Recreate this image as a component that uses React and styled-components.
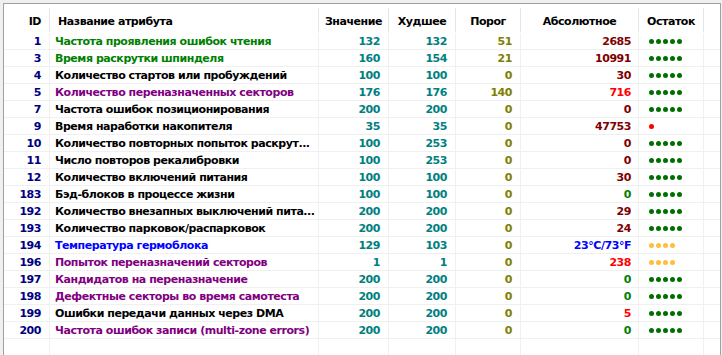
import React from "react";
import styled, { createGlobalStyle } from "styled-components";

const Global = createGlobalStyle`
  html, body { margin: 0; padding: 0; background: #f0f0f0; }
  body { width: 722px; height: 355px; overflow: hidden; }
  #root { height: 355px; }
`;

const C = {
  green: "#008000",
  black: "#000000",
  purple: "#800080",
  blue: "#0000ff",
  teal: "#008080",
  olive: "#808000",
  darkred: "#800000",
  red: "#ff0000",
  navy: "#000080",
};

const COLS = "46px 269px 70px 67px 65px 118px 65px 1fr";
const GRID = "#f0f0f0";
const SEP = "#e5e5e5";

const Frame = styled.div`
  height: 355px;
  box-sizing: border-box;
  padding: 3px 1px 0 3px;
  background: #f0f0f0;
  display: flex;
`;

const ListBox = styled.div`
  flex: 1;
  display: flex;
  flex-direction: column;
  background: #ffffff;
  border: 1px solid #a0a0a0;
  border-bottom: none;
  font-family: "DejaVu Sans", Tahoma, sans-serif;
  font-weight: bold;
  font-size: 11px;
  letter-spacing: -0.45px;
  overflow: hidden;
`;

const HeaderRow = styled.div`
  display: grid;
  grid-template-columns: ${COLS};
  padding-top: 4px;
  height: 24px;
`;

const HeadCell = styled.div`
  display: flex;
  align-items: center;
  justify-content: ${(p) => p.$align || "center"};
  padding: 3px ${(p) => (p.$align === "flex-end" ? "8px" : "0")} 0 ${(p) => (p.$align === "flex-start" ? "8px" : "0")};
  border-right: ${(p) => (p.$last ? "none" : `1px solid ${SEP}`)};
  color: #000;
  white-space: nowrap;
`;

const Body = styled.div`
  display: flex;
  flex-direction: column;
  padding-top: 1px;
`;

const Row = styled.div`
  display: grid;
  grid-template-columns: ${COLS};
  height: 16px;
  border-bottom: 1px solid ${GRID};
`;

const Cell = styled.div`
  display: flex;
  align-items: center;
  justify-content: ${(p) => p.$align || "flex-end"};
  padding: 1px ${(p) => p.$pr ?? 8}px 0 ${(p) => p.$pl ?? 0}px;
  border-right: ${(p) => (p.$last ? "none" : `1px solid ${GRID}`)};
  color: ${(p) => p.$color || "#000"};
  white-space: nowrap;
  overflow: hidden;
  line-height: 15px;
`;

const Filler = styled.div`
  flex: 1;
  display: grid;
  grid-template-columns: ${COLS};
`;

const FillCell = styled.div`
  border-right: ${(p) => (p.$last ? "none" : `1px solid ${GRID}`)};
`;

const Dots = styled.div`
  display: flex;
  gap: 2px;
`;

const Dot = styled.span`
  width: 5px;
  height: 5px;
  border-radius: 50%;
  background: ${(p) => p.$color};
`;

const DG = "#006f00";
const OR = "#ffbf3a";
const RD = "#ff0000";

const rows = [
  [1, "Частота проявления ошибок чтения", C.green, 132, 132, 51, "2685", C.darkred, 5, DG],
  [3, "Время раскрутки шпинделя", C.green, 160, 154, 21, "10991", C.darkred, 5, DG],
  [4, "Количество стартов или пробуждений", C.black, 100, 100, 0, "30", C.darkred, 5, DG],
  [5, "Количество переназначенных секторов", C.purple, 176, 176, 140, "716", C.red, 5, DG],
  [7, "Частота ошибок позиционирования", C.black, 200, 200, 0, "0", C.darkred, 5, DG],
  [9, "Время наработки накопителя", C.black, 35, 35, 0, "47753", C.darkred, 1, RD],
  [10, "Количество повторных попыток раскрут...", C.black, 100, 253, 0, "0", C.darkred, 5, DG],
  [11, "Число повторов рекалибровки", C.black, 100, 253, 0, "0", C.darkred, 5, DG],
  [12, "Количество включений питания", C.black, 100, 100, 0, "30", C.darkred, 5, DG],
  [183, "Бэд-блоков в процессе жизни", C.black, 100, 100, 0, "0", C.green, 5, DG],
  [192, "Количество внезапных выключений пита...", C.black, 200, 200, 0, "29", C.darkred, 5, DG],
  [193, "Количество парковок/распарковок", C.black, 200, 200, 0, "24", C.darkred, 5, DG],
  [194, "Температура гермоблока", C.blue, 129, 103, 0, "23°C/73°F", C.blue, 4, OR],
  [196, "Попыток переназначений секторов", C.purple, 1, 1, 0, "238", C.red, 4, OR],
  [197, "Кандидатов на переназначение", C.purple, 200, 200, 0, "0", C.green, 5, DG],
  [198, "Дефектные секторы во время самотеста", C.purple, 200, 200, 0, "0", C.green, 5, DG],
  [199, "Ошибки передачи данных через DMA", C.black, 200, 200, 0, "5", C.red, 5, DG],
  [200, "Частота ошибок записи (multi-zone errors)", C.purple, 200, 200, 0, "0", C.green, 5, DG],
];

export default function App() {
  return (
    <>
      <Global />
      <Frame>
        <ListBox>
          <HeaderRow>
            <HeadCell $align="flex-end">ID</HeadCell>
            <HeadCell $align="flex-start">Название атрибута</HeadCell>
            <HeadCell>Значение</HeadCell>
            <HeadCell>Худшее</HeadCell>
            <HeadCell>Порог</HeadCell>
            <HeadCell>Абсолютное</HeadCell>
            <HeadCell>Остаток</HeadCell>
            <HeadCell $last />
          </HeaderRow>
          <Body>
            {rows.map(([id, name, nc, val, worst, thr, abs, ac, n, dc]) => (
              <Row key={id}>
                <Cell $color={C.navy}>{id}</Cell>
                <Cell $align="flex-start" $pl={5} $pr={2} $color={nc}>{name}</Cell>
                <Cell $color={C.teal}>{val}</Cell>
                <Cell $color={C.teal}>{worst}</Cell>
                <Cell $color={C.olive}>{thr}</Cell>
                <Cell $color={ac} $pr={7}>{abs}</Cell>
                <Cell $align="flex-start" $pl={10} $pr={0}>
                  <Dots>
                    {Array.from({ length: n }).map((_, i) => (
                      <Dot key={i} $color={dc} />
                    ))}
                  </Dots>
                </Cell>
                <Cell $last />
              </Row>
            ))}
          </Body>
          <Filler>
            {Array.from({ length: 8 }).map((_, i) => (
              <FillCell key={i} $last={i === 7} />
            ))}
          </Filler>
        </ListBox>
      </Frame>
    </>
  );
}
